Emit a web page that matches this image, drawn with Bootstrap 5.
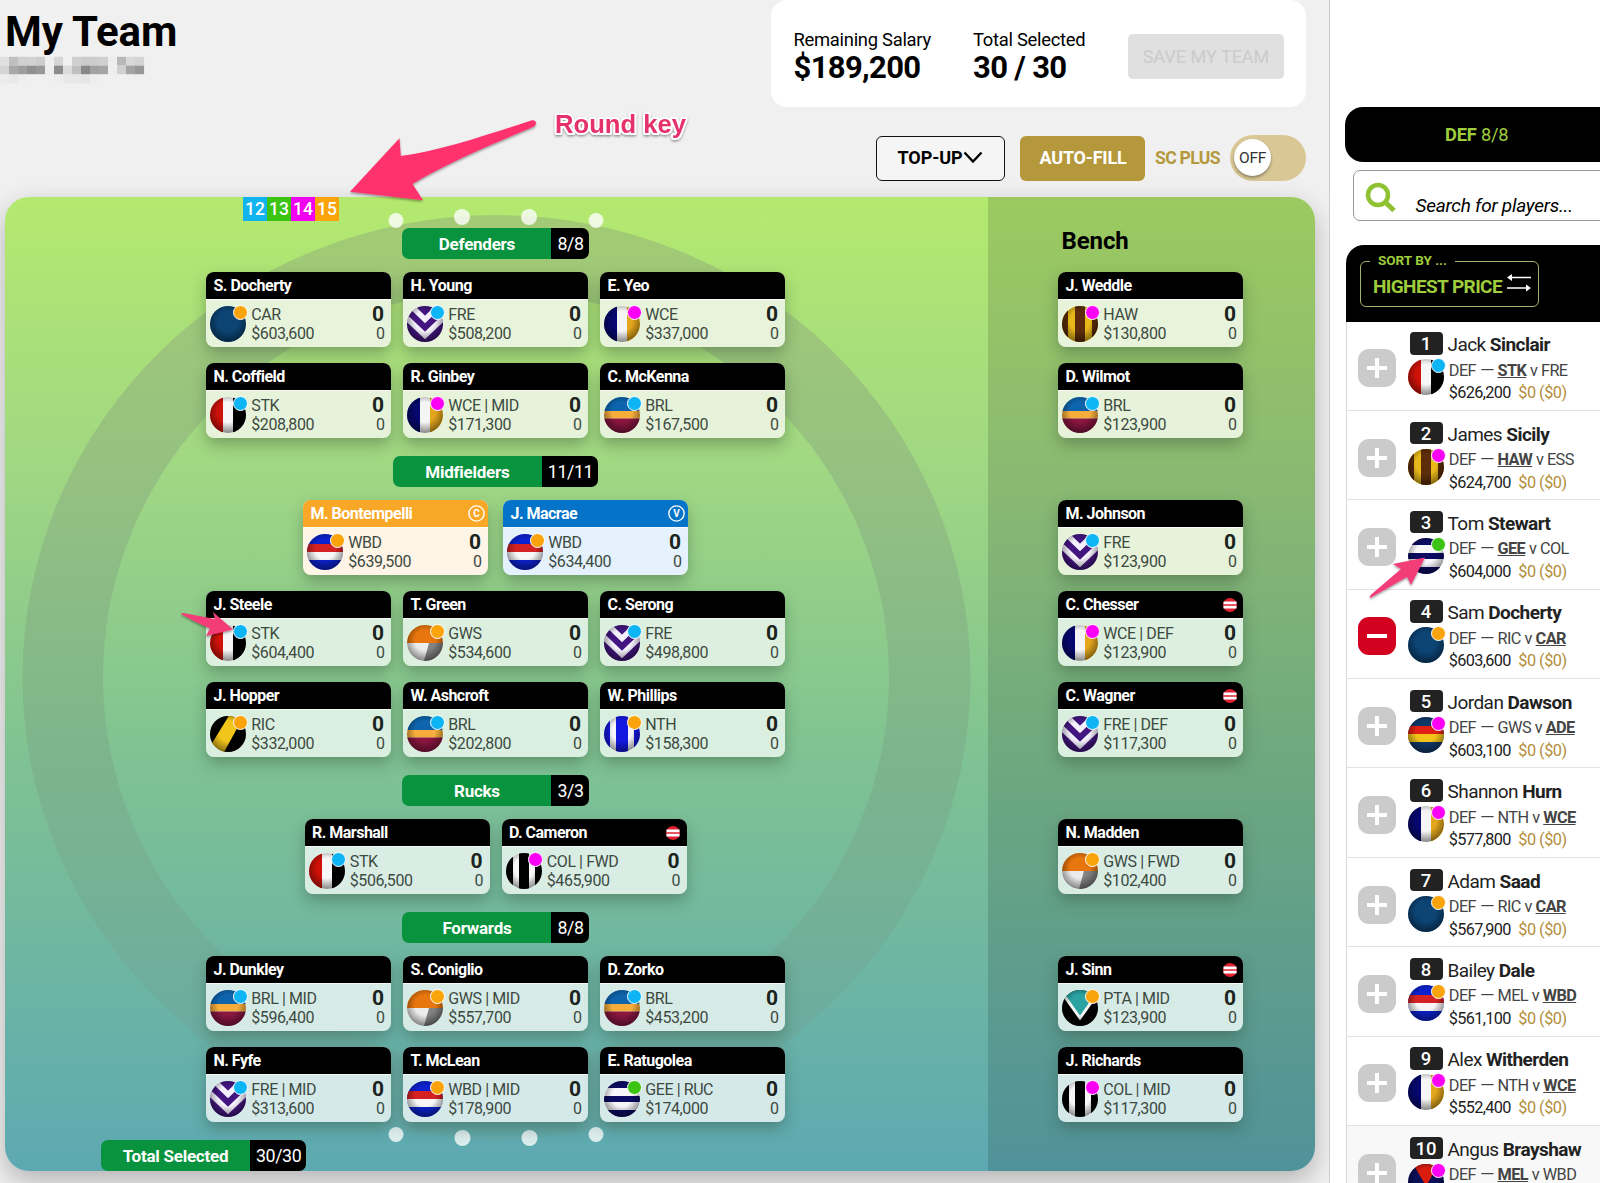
<!DOCTYPE html>
<html lang="en">
<head>
<meta charset="utf-8">
<meta name="viewport" content="width=device-width, initial-scale=1">
<title>My Team</title>
<link href="https://cdn.jsdelivr.net/npm/bootstrap@5.3.0/dist/css/bootstrap.min.css" rel="stylesheet">
<style>
html, body { height: 1183px; overflow: hidden; }
body { font-family: Roboto, "Liberation Sans", sans-serif; color: #000; background: #fff; line-height: 1.2; }
.main-pane { width: 1330px; height: 1183px; background: #f0f0f0; border-right: 1px solid #ccc; padding-left: 5px; overflow: hidden; }
.top-zone { height: 197px; padding-right: 23px; }
.page-title { font-size: 42px; font-weight: 700; margin: 7px 0 0 0; line-height: 50px; letter-spacing: -.1px; }
.name-mosaic { display: block; margin: -1px 0 0 -5px; filter: blur(.6px); }
.salary-box { width: 535px; height: 107px; background: #fff; border-radius: 16px; padding: 25.5px 22px 0 22.5px; }
.salary-box .stat-label { font-size: 18.4px; line-height: 27px; white-space: nowrap; letter-spacing: -.28px; }
.salary-box .stat-value { font-size: 31px; font-weight: 700; line-height: 30px; white-space: nowrap; letter-spacing: -.65px; }
.stat-a { width: 179.5px; } .stat-b { width: 155px; }
.save-btn { width: 156px; height: 45px; margin-top: 8.5px; background: #e0e0e0; color: #cbcbcb; border-radius: 5px; font-size: 18px; white-space: nowrap; }
.controls { margin-top: 28px; height: 46px; }
.topup { width: 129px; height: 45px; border: 1.5px solid #111; border-radius: 6px; font-size: 18px; font-weight: 700; background: #f5f5f5; letter-spacing: -.1px; }
.autofill { width: 125px; height: 45px; border-radius: 6px; background: #b6983c; color: #fff; font-size: 18px; font-weight: 700; margin-left: 15px; padding-left: 1px; letter-spacing: -.2px; }
.plus-text { font-size: 17.6px; font-weight: 700; color: #b6983c; margin-left: 10px; width: 75px; white-space: nowrap; letter-spacing: -.7px; padding-top: 1px; }
.toggle { width: 76px; height: 46px; border-radius: 23px; background: #d9c896; padding: 4px; }
.knob { width: 37px; height: 37px; border-radius: 50%; background: #fff; font-size: 15.5px; color: #333; box-shadow: 0 2px 3px rgba(0,0,0,.35); letter-spacing: -.3px; padding-top: 2px; }
.field { width: 1310px; height: 974px; border-radius: 24px; overflow: hidden; background: linear-gradient(#b4e96f, #a0d783 28%, #7fc293 58%, #5da9b2); position: relative; }
.field-wrap { width: 1310px; border-radius: 24px; box-shadow: 0 10px 26px rgba(0,0,0,.25); }
.oval { position: absolute; left: 0; top: 0; }
.pitch { width: 983px; position: relative; padding: 30.7px 2px 0 0; }
.bench { width: 327px; position: relative; background: rgba(0,0,0,.135); padding: 30px 0 0 70px; }
.bench h2 { font-size: 24px; font-weight: 700; line-height: 28px; margin: 0 0 17.4px 3.5px; letter-spacing: -.1px; }
.bench .slot { height: 75px; margin-bottom: 16px; }
.bench .slot-group { margin-bottom: 62px; }
.round-key { position: absolute; left: 238px; top: 0; }
.round-key span { width: 24px; height: 23.6px; color: #fff; font-size: 17.5px; font-weight: 500; text-align: center; line-height: 25.5px; }
.pos-pill { height: 31.3px; border-radius: 7px; overflow: hidden; font-size: 17px; color: #fff; margin: 0 auto 13.4px; width: max-content; }
.pos-pill b { width: 149px; background: #0a933e; text-align: center; line-height: 32px; letter-spacing: -.25px; }
.pos-pill span { background: #000; line-height: 32px; padding: 0 5px 0 6px; font-size: 17.8px; letter-spacing: -.4px; }
.line-up { margin-bottom: 16px; gap: 12px; height: 75px; }
.line-up.last { margin-bottom: 17.3px; }
.line-up.leaders { gap: 15px; }
.pcard-shell { width: 185px; height: 75px; border-radius: 8px; box-shadow: 0 7px 15px -1px rgba(50,75,55,.42); }
.pcard { width: 185px; height: 75px; border-radius: 8px; overflow: hidden; background: #e7f3da; }
.phead { height: 27px; background: #000; color: #fff; font-weight: 700; font-size: 16px; line-height: 27px; padding: 0 6.5px 0 7.5px; white-space: nowrap; letter-spacing: -.52px; }
.pbody { height: 48px; padding: 6px 6px 0 4.3px; border-top: 1px solid rgba(255,255,255,.7); color: #3d4a42; }
.ball-box { width: 36px; height: 36px; position: relative; flex: none; }
.ball-box > svg { display: block; width: 36px; height: 36px; }
.rdot { position: absolute; right: -1.5px; top: -1px; width: 15px; height: 15px; border-radius: 50%; border: 1.2px solid #fff; }
.ptext { margin-left: 5px; font-size: 16px; line-height: 19.4px; margin-top: -1.500px; white-space: nowrap; letter-spacing: -.42px; }
.pscore { text-align: right; font-size: 16px; line-height: 19.4px; margin-top: -1.500px; }
.pscore b { display: block; font-size: 21px; color: #1c2420; line-height: 18px; margin: 0 1px .9px 0; }
.captain .phead { background: #f8a726; } .captain .pcard { background: #fff5e6; }
.vice .phead { background: #0473c8; } .vice .pcard { background: #e5f2fd; }
.pos-pill.total-pill { position: absolute; left: 96px; top: 943px; margin: 0; }
.side-pane { width: 270px; height: 1183px; padding-top: 107px; overflow: hidden; background: #fff; }
.pos-tab { margin-left: 15px; width: 300px; height: 55px; border-radius: 18px; background: #000; color: #9fcc3c; font-size: 18.3px; padding-left: 100px; line-height: 56px; letter-spacing: -.2px; }
.search { margin: 8px 0 0 22.5px; width: 300px; height: 51px; border: 1px solid #999; border-radius: 7px; padding-left: 11px; }
.search i { font-size: 19px; margin: 22.5px 0 0 19px; line-height: 24px; white-space: nowrap; letter-spacing: -.25px; }
.search svg { margin-top: 11px; }
.sort-head { margin: 24px 0 0 16px; width: 300px; height: 76.5px; background: #000; border-radius: 18px 0 0 0; padding: 8px 0 0 14px; color: #9fcc3c; }
.sort-box { width: 179px; height: 54px; position: relative; }
.sort-box::before { content: ""; position: absolute; inset: 8px 0 0 0; border: 1px solid #9fb66a; border-radius: 6px; }
.sort-box .cap { position: absolute; left: 10px; top: 0; background: #000; padding: 0 8px; font-size: 13.5px; font-weight: 700; line-height: 15px; }
.sort-box .val { position: absolute; left: 13px; top: 22px; font-size: 19px; font-weight: 700; line-height: 24px; white-space: nowrap; letter-spacing: -.6px; }
.sort-box svg { position: absolute; left: 147px; top: 19px; }
.plist { margin-left: 16px; width: 300px; border-left: 1px solid #d8d8d8; }
.prow { height: 89.4px; border-bottom: 1.5px solid #e2e2e2; padding: 10.700px 0 0 11px; }
.prow:last-child { background: #f8f8f8; height: 60px; border: 0; }
.add-btn { width: 38px; height: 38px; border-radius: 11px; background: #cbcbcb; margin-top: 17px; flex: none; }
.add-btn.minus { background: #d4001f; }
.rank-col { width: 36px; margin-left: 12px; flex: none; }
.rank { width: 33px; height: 22.5px; margin: 0 0 4.5px 1.5px; background: #222; color: #fff; border-radius: 4px; font-size: 18.5px; font-weight: 500; text-align: center; line-height: 24px; }
.info { margin-left: 3.500px; white-space: nowrap; color: #222; }
.info .nm { font-size: 19px; line-height: 24px; margin-top: 1px; letter-spacing: -.55px; }
.info .mt { font-size: 16.3px; line-height: 22px; margin: 2.5px 0 0 1.3px; color: #444; letter-spacing: -.6px; word-spacing: .3px; }
.info .mt span { display: inline-block; transform: scaleX(1.15); margin: 0 1px; }
.info .pr { font-size: 16.3px; line-height: 22px; margin: .5px 0 0 1.3px; letter-spacing: -.65px; }
.info .pr span { color: #b28d3a; margin-left: 4px; letter-spacing: -.5px; }
.notes { position: absolute; left: 0; top: 0; pointer-events: none; }
</style>
<script src="https://cdn.jsdelivr.net/npm/bootstrap@5.3.0/dist/js/bootstrap.bundle.min.js"></script>
</head>
<body>
<svg width="0" height="0" class="position-absolute" aria-hidden="true">
  <defs>
    <radialGradient id="shade" cx=".5" cy=".42" r=".56"><stop offset=".5" stop-color="#000" stop-opacity="0"/><stop offset="1" stop-color="#000" stop-opacity=".42"/></radialGradient>
    <clipPath id="round"><circle cx="18" cy="18" r="18"/></clipPath>
    <symbol id="CAR" viewBox="0 0 36 36"><path fill="#0c4474" d="M0 0h36v36H0z"/></symbol>
    <symbol id="FRE" viewBox="0 0 36 36"><path fill="#431580" d="M0 0h36v36H0z"/><path fill="none" stroke="#f3effb" stroke-width="5.5" d="M-2 10.500l20 19L38 10.500M2-2l16 15.500L34-2"/></symbol>
    <symbol id="WCE" viewBox="0 0 36 36"><path fill="#06086e" d="M0 0h13v36H0z"/><path fill="#f5f5f5" d="M13 0h10v36H13z"/><path fill="#e3a61c" d="M23 0h13v36H23z"/></symbol>
    <symbol id="STK" viewBox="0 0 36 36"><path fill="#cf1209" d="M0 0h13v36H0z"/><path fill="#f7f7f7" d="M13 0h10v36H13z"/><path d="M23 0h13v36H23z"/></symbol>
    <symbol id="BRL" viewBox="0 0 36 36"><path fill="#0e65ae" d="M0 0h36v14H0z"/><path fill="#f6ad3c" d="M0 14h36v7.500H0z"/><path fill="#8a1640" d="M0 21.500h36V36H0z"/></symbol>
    <symbol id="HAW" viewBox="0 0 36 36"><path fill="#e8b91a" d="M0 0h36v36H0z"/><path fill="#5c2d08" d="M0 0h6v36H0zM13 0h10v36H13zM30 0h6v36h-6z"/></symbol>
    <symbol id="WBD" viewBox="0 0 36 36"><path fill="#0d22cf" d="M0 0h36v36H0z"/><path fill="#d42222" d="M0 10h36v8H0z"/><path fill="#f7f7f7" d="M0 18h36v8H0z"/></symbol>
    <symbol id="GWS" viewBox="0 0 36 36"><path fill="#e8760e" d="M0 0h36v18H0z"/><path fill="#ececec" d="M0 18h23l-5 18H0z"/><path fill="#828282" d="M22 18h14v18H17z"/></symbol>
    <symbol id="RIC" viewBox="0 0 36 36"><path d="M0 0h36v36H0z"/><path fill="#f2c51c" d="M20-2h15L13 38-1 32z"/></symbol>
    <symbol id="NTH" viewBox="0 0 36 36"><path fill="#f4f4fa" d="M0 0h36v36H0z"/><path fill="#1318e0" d="M0 0h6v36H0zM12 0h12v36H12zM30 0h6v36h-6z"/></symbol>
    <symbol id="COL" viewBox="0 0 36 36"><path fill="#f7f7f7" d="M0 0h36v36H0z"/><path d="M0 0h7v36H0zM13 0h10v36H13zM29 0h7v36h-7z"/></symbol>
    <symbol id="GEE" viewBox="0 0 36 36"><path fill="#f7f7fb" d="M0 0h36v36H0z"/><path fill="#0b0b63" d="M0 0h36v7H0zM0 15h36v6H0zM0 29h36v7H0z"/></symbol>
    <symbol id="PTA" viewBox="0 0 36 36"><path d="M0 0h36v36H0z"/><path fill="#2ba3a3" stroke="#f5f5f5" stroke-width="3" d="M1 4L6-6h24l5 10-17 24z"/></symbol>
    <symbol id="ADE" viewBox="0 0 36 36"><path fill="#10396a" d="M0 0h36v36H0z"/><path fill="#df1f12" d="M0 9h36v8H0z"/><path fill="#f3c31a" d="M0 17h36v8H0z"/></symbol>
    <symbol id="MEL" viewBox="0 0 36 36"><path fill="#0b1059" d="M0 0h36v36H0z"/><path fill="#d91e10" d="M5 0h26L18 22z"/></symbol>
  </defs>
</svg>
<div class="d-flex position-relative">
  <main class="main-pane flex-shrink-0">
    <div class="top-zone d-flex justify-content-between">
      <div>
        <h1 class="page-title">My Team</h1>
        <svg class="name-mosaic" id="mosaic" width="154" height="30"></svg>
      </div>
      <div>
        <div class="salary-box d-flex">
          <div class="stat-a"><div class="stat-label">Remaining Salary</div><div class="stat-value">$189,200</div></div>
          <div class="stat-b"><div class="stat-label">Total Selected</div><div class="stat-value">30 / 30</div></div>
          <div class="save-btn d-flex align-items-center justify-content-center">SAVE MY TEAM</div>
        </div>
        <div class="controls d-flex align-items-center justify-content-end">
          <div class="topup d-flex align-items-center justify-content-center">TOP-UP<svg width="21" height="14" viewBox="0 0 21 14" fill="none" stroke="#000" stroke-width="2.300"><path d="M2.500 1.500l8.500 9 8.500-9"/></svg></div>
          <div class="autofill d-flex align-items-center justify-content-center">AUTO-FILL</div>
          <div class="plus-text">SC PLUS</div>
          <div class="toggle"><div class="knob d-flex align-items-center justify-content-center">OFF</div></div>
        </div>
      </div>
    </div>
    <div class="field-wrap">
      <div class="field d-flex">
        <svg class="oval" width="983" height="974">
          <defs><linearGradient id="ring" x1="0" y1="0" x2="0" y2="1"><stop offset="0" stop-color="#83907c" stop-opacity=".33"/><stop offset=".6" stop-color="#76907c" stop-opacity=".28"/><stop offset="1" stop-color="#76907c" stop-opacity=".1"/></linearGradient></defs>
          <path fill="url(#ring)" fill-rule="evenodd" d="M17.500 480a474 462 0 0 1 948 0a474 462 0 0 1-948 0zM98 480a393 386 0 0 0 786 0a393 386 0 0 0-786 0z"/>
          <g fill="#fff" fill-opacity=".78"><circle cx="391" cy="23.500" r="7.500"/><circle cx="457" cy="20" r="8"/><circle cx="524" cy="20" r="8"/><circle cx="591" cy="23.500" r="7.500"/><circle cx="391" cy="937.500" r="7.500"/><circle cx="457.500" cy="941" r="8"/><circle cx="524.500" cy="941" r="8"/><circle cx="591" cy="937.500" r="7.500"/></g>
        </svg>
        <div class="pitch">
          <div class="round-key d-flex"><span style="background:#12b4f0">12</span><span style="background:#3bc414">13</span><span style="background:#f200f2">14</span><span style="background:#fba30b">15</span></div>
          <div id="pitch"></div>
          <div class="pos-pill total-pill d-flex"><b>Total Selected</b><span>30/30</span></div>
        </div>
        <div class="bench"><h2>Bench</h2><div id="bench"></div></div>
      </div>
    </div>
  </main>
  <aside class="side-pane">
    <div class="pos-tab"><b>DEF</b> 8/8</div>
    <div class="search d-flex align-items-start"><svg width="32" height="32" viewBox="0 0 32 32" fill="none" stroke="#8fc232"><circle cx="13" cy="13" r="10" stroke-width="4.500"/><path d="M20 20l9 8.500" stroke-width="5"/></svg><i>Search for players...</i></div>
    <div class="sort-head"><div class="sort-box"><span class="cap">SORT BY ...</span><span class="val">HIGHEST PRICE</span>
      <svg width="24" height="22" viewBox="0 0 24 22" fill="#fff" stroke="#fff"><path d="M2 5.500h22M0 16h22" stroke-width="1.600"/><path d="M0 5.500l5-3.500v7zM24 16l-5-3.500v7z" stroke="none"/></svg></div></div>
    <div class="plist" id="list"></div>
  </aside>
  <svg class="notes" width="1600" height="1183" aria-hidden="true">
    <defs><filter id="soft" x="-10%" y="-10%" width="130%" height="130%"><feDropShadow dx="0" dy="1.500" stdDeviation="1.200" flood-opacity=".4"/></filter></defs>
    <g fill="#ff316e" filter="url(#soft)">
      <path d="M350 191.700L399.500 138.300L400.800 156C440 151 490 134 532 120.200Q536 120 536 123.500Q535.500 126 533 127C490 145 445 164 412.500 184L423 200.300Z"/>
      <path d="M181 614Q182 612.500 186 613.500L215 619L213 612L233 629.500L206 636L210 628.500Q195 622 181 614Z" fill="#f23d78"/>
      <path d="M1370 598Q1369 596 1373 593L1401 569L1393 564L1425 557.500L1411 585L1407 577Z" fill="#f23d78"/>
    </g>
    <text x="555" y="132.500" font-family="Liberation Sans, sans-serif" font-weight="700" font-size="26" textLength="131" lengthAdjust="spacingAndGlyphs" fill="#e5316b" stroke="#fff" stroke-width="4" stroke-linejoin="round" paint-order="stroke" filter="url(#soft)">Round key</text>
  </svg>
</div>
<script>
const roundColour = { b: '#0db5f5', g: '#3bc414', m: '#fb00f4', o: '#fba30b' };
const ball = (club, round) => `<div class="ball-box"><svg viewBox="0 0 36 36"><g clip-path="url(#round)"><use href="#${club}" width="36" height="36"/><circle cx="18" cy="18" r="18" fill="url(#shade)"/></g></svg><span class="rdot" style="background:${roundColour[round]}"></span></div>`;
const mark = { C: 'captain', V: 'vice' };
const sign = k => !k ? '' : k === '!' ?
  '<svg width="14" height="14" viewBox="0 0 14 14"><circle cx="7" cy="7" r="7" fill="#e02030"/><path d="M.500 4.800h13M.500 9.200h13" stroke="#fff" stroke-width="2.700"/></svg>' :
  `<svg width="17" height="17" viewBox="0 0 17 17" style="margin-right:-3px"><circle cx="8.500" cy="8.500" r="7.600" fill="none" stroke="#fff" stroke-width="1.400"/><text x="8.500" y="12" font-size="10" font-weight="700" fill="#fff" text-anchor="middle" letter-spacing="0">${k}</text></svg>`;
// entry: name | club | second position | price | round | flag
const card = (s, i) => {
  const [n, c, p, price, r, k] = s.split('|');
  const tint = ['#e7f3da','#e6f3da','#fff','#ddf0df','#dbefe0','#d9ede5','#d7ebe6','#d5e9e9'][i];
  return `<div class="pcard-shell ${mark[k] || ''}"><div class="pcard"${mark[k] ? '' : ` style="background:${tint}"`}><div class="phead d-flex justify-content-between align-items-center"><span>${n}</span>${sign(k)}</div><div class="pbody d-flex">${ball(c, r)}<div class="ptext">${c}${p ? ' | ' + p : ''}<br>$${price}</div><div class="pscore ms-auto"><b>0</b>0</div></div></div></div>`;
};
const groups = [
  ['Defenders', '8/8', [['S. Docherty|CAR||603,600|o','H. Young|FRE||508,200|b','E. Yeo|WCE||337,000|m'], ['N. Coffield|STK||208,800|b','R. Ginbey|WCE|MID|171,300|m','C. McKenna|BRL||167,500|b']]],
  ['Midfielders', '11/11', [['M. Bontempelli|WBD||639,500|o|C','J. Macrae|WBD||634,400|o|V'], ['J. Steele|STK||604,400|b','T. Green|GWS||534,600|o','C. Serong|FRE||498,800|b'], ['J. Hopper|RIC||332,000|o','W. Ashcroft|BRL||202,800|b','W. Phillips|NTH||158,300|o']]],
  ['Rucks', '3/3', [['R. Marshall|STK||506,500|b','D. Cameron|COL|FWD|465,900|m|!']]],
  ['Forwards', '8/8', [['J. Dunkley|BRL|MID|596,400|b','S. Coniglio|GWS|MID|557,700|o','D. Zorko|BRL||453,200|b'], ['N. Fyfe|FRE|MID|313,600|b','T. McLean|WBD|MID|178,900|o','E. Ratugolea|GEE|RUC|174,000|g']]]
];
let line = 0;
document.getElementById('pitch').innerHTML = groups.map(([t, n, rows]) =>
  `<div class="pos-pill d-flex"><b>${t}</b><span>${n}</span></div>` + rows.map((r, j) => {
    const i = line++;
    return `<div class="line-up d-flex justify-content-center${j === rows.length - 1 ? ' last' : ''}${i === 2 ? ' leaders' : ''}">${r.map(x => card(x, i)).join('')}</div>`;
  }).join('')).join('');
const benchGroups = [['J. Weddle|HAW||130,800|m','D. Wilmot|BRL||123,900|b'], ['M. Johnson|FRE||123,900|b','C. Chesser|WCE|DEF|123,900|m|!','C. Wagner|FRE|DEF|117,300|b|!'], ['N. Madden|GWS|FWD|102,400|o'], ['J. Sinn|PTA|MID|123,900|o|!','J. Richards|COL|MID|117,300|m']];
line = 0;
document.getElementById('bench').innerHTML = benchGroups.map(g => `<div class="slot-group">${g.map(x => { const i = line++; return `<div class="slot">${card(x, i === 2 ? 1 : i)}</div>`; }).join('')}</div>`).join('');
const list = ['Jack|Sinclair|STK|*STK* v FRE|626,200|b','James|Sicily|HAW|*HAW* v ESS|624,700|m','Tom|Stewart|GEE|*GEE* v COL|604,000|g','Sam|Docherty|CAR|RIC v *CAR*|603,600|o','Jordan|Dawson|ADE|GWS v *ADE*|603,100|m','Shannon|Hurn|WCE|NTH v *WCE*|577,800|m','Adam|Saad|CAR|RIC v *CAR*|567,900|o','Bailey|Dale|WBD|MEL v *WBD*|561,100|o','Alex|Witherden|WCE|NTH v *WCE*|552,400|m','Angus|Brayshaw|MEL|*MEL* v WBD||m'];
document.getElementById('list').innerHTML = list.map((s, i) => {
  const [f, l, c, m, p, r] = s.split('|');
  const picked = i === 3;
  return `<div class="prow d-flex align-items-start"><div class="add-btn d-flex align-items-center justify-content-center${picked ? ' minus' : ''}"><svg width="22" height="22" viewBox="0 0 22 22" stroke="#fff" stroke-width="4"><path d="M1 11h20${picked ? '' : 'M11 1v20'}"/></svg></div><div class="rank-col"><div class="rank">${i + 1}</div>${ball(c, r)}</div><div class="info"><div class="nm">${f} <b>${l}</b></div><div class="mt">DEF <span>—</span> ${m.replace(/\*(.+)\*/, '<b><u>$1</u></b>')}</div>${p ? `<div class="pr">$${p} <span>$0 ($0)</span></div>` : ''}</div></div>`;
}).join('');
// greyed-out squares over the team's owner name
const shades = [['e0','c0','d0','d2','cc','ee','d6','f0','d0','cc','cd','d0','ee','b8','d8','d4'], ['d4','a8','9e','90','98','ee','8c','dc','c0','88','a2','a6','ee','d0','a4','98'], ['ec','e8','ee','f0','f0','f0','ee','e8','e8','e6','ee','f0','f0','f0','f0','f0']];
document.getElementById('mosaic').innerHTML = shades.map((row, y) => row.map((v, x) => `<rect x="${x * 9}" y="${y * 8.8 + .8}" width="9.100" height="8.900" fill="#${v}${v}${v}"/>`).join('')).join('');
</script>
</body>
</html>
